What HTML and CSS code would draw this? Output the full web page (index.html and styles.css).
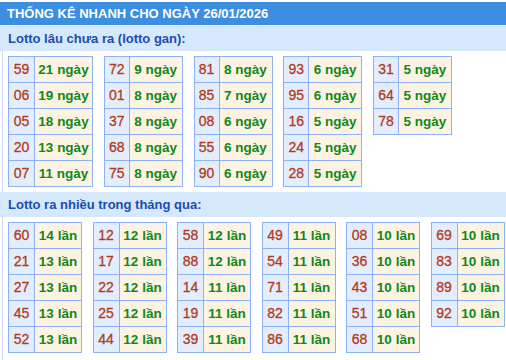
FILE: index.html
```html
<!DOCTYPE html>
<html lang="vi">
<head>
<meta charset="utf-8">
<title>Thống kê nhanh</title>
<link rel="stylesheet" href="styles.css">
</head>
<body>
<div class="page">
  <div class="title">THỐNG KÊ NHANH CHO NGÀY 26/01/2026</div>
  <div class="sub">Lotto lâu chưa ra (lotto gan):</div>
  <div class="body gan">
    <div class="tbl wide">
      <div class="num">59</div><div class="val">21 ngày</div>
      <div class="num">06</div><div class="val">19 ngày</div>
      <div class="num">05</div><div class="val">18 ngày</div>
      <div class="num">20</div><div class="val">13 ngày</div>
      <div class="num">07</div><div class="val">11 ngày</div>
    </div>
    <div class="tbl">
      <div class="num">72</div><div class="val">9 ngày</div>
      <div class="num">01</div><div class="val">8 ngày</div>
      <div class="num">37</div><div class="val">8 ngày</div>
      <div class="num">68</div><div class="val">8 ngày</div>
      <div class="num">75</div><div class="val">8 ngày</div>
    </div>
    <div class="tbl">
      <div class="num">81</div><div class="val">8 ngày</div>
      <div class="num">85</div><div class="val">7 ngày</div>
      <div class="num">08</div><div class="val">6 ngày</div>
      <div class="num">55</div><div class="val">6 ngày</div>
      <div class="num">90</div><div class="val">6 ngày</div>
    </div>
    <div class="tbl">
      <div class="num">93</div><div class="val">6 ngày</div>
      <div class="num">95</div><div class="val">6 ngày</div>
      <div class="num">16</div><div class="val">5 ngày</div>
      <div class="num">24</div><div class="val">5 ngày</div>
      <div class="num">28</div><div class="val">5 ngày</div>
    </div>
    <div class="tbl">
      <div class="num">31</div><div class="val">5 ngày</div>
      <div class="num">64</div><div class="val">5 ngày</div>
      <div class="num">78</div><div class="val">5 ngày</div>
    </div>
  </div>
  <div class="sub sub2">Lotto ra nhiều trong tháng qua:</div>
  <div class="body nhieu">
    <div class="tbl">
      <div class="num">60</div><div class="val">14 lần</div>
      <div class="num">21</div><div class="val">13 lần</div>
      <div class="num">27</div><div class="val">13 lần</div>
      <div class="num">45</div><div class="val">13 lần</div>
      <div class="num">52</div><div class="val">13 lần</div>
    </div>
    <div class="tbl">
      <div class="num">12</div><div class="val">12 lần</div>
      <div class="num">17</div><div class="val">12 lần</div>
      <div class="num">22</div><div class="val">12 lần</div>
      <div class="num">25</div><div class="val">12 lần</div>
      <div class="num">44</div><div class="val">12 lần</div>
    </div>
    <div class="tbl">
      <div class="num">58</div><div class="val">12 lần</div>
      <div class="num">88</div><div class="val">12 lần</div>
      <div class="num">14</div><div class="val">11 lần</div>
      <div class="num">19</div><div class="val">11 lần</div>
      <div class="num">39</div><div class="val">11 lần</div>
    </div>
    <div class="tbl">
      <div class="num">49</div><div class="val">11 lần</div>
      <div class="num">54</div><div class="val">11 lần</div>
      <div class="num">71</div><div class="val">11 lần</div>
      <div class="num">82</div><div class="val">11 lần</div>
      <div class="num">86</div><div class="val">11 lần</div>
    </div>
    <div class="tbl">
      <div class="num">08</div><div class="val">10 lần</div>
      <div class="num">36</div><div class="val">10 lần</div>
      <div class="num">43</div><div class="val">10 lần</div>
      <div class="num">51</div><div class="val">10 lần</div>
      <div class="num">68</div><div class="val">10 lần</div>
    </div>
    <div class="tbl">
      <div class="num">69</div><div class="val">10 lần</div>
      <div class="num">83</div><div class="val">10 lần</div>
      <div class="num">89</div><div class="val">10 lần</div>
      <div class="num">92</div><div class="val">10 lần</div>
    </div>
  </div>
</div>
</body>
</html>
```
FILE: styles.css
```css
html, body {
  margin: 0;
  padding: 0;
  background: #ffffff;
}
body {
  font-family: "Liberation Sans", Arial, sans-serif;
  font-size: 13px;
  font-weight: bold;
  overflow: hidden;
}
.page {
  padding-top: 2px;
  width: 506px;
}
.title {
  height: 23px;
  line-height: 23px;
  padding-left: 7px;
  background: #3b8ee0;
  color: #ffffff;
  font-size: 13px;
  white-space: nowrap;
}
.sub {
  height: 25px;
  line-height: 25px;
  border-top: 1px solid #e4effc;
  padding-left: 8px;
  background: #d5e8fc;
  color: #1c4db0;
  font-size: 13px;
}
.sub2 {
  height: 25px;
  line-height: 25px;
  border-top: 0;
}
.body {
  margin-left: 2px;
  border-left: 1px solid #c9dcf4;
  padding: 5px 0 5px 5px;
  display: flex;
  align-items: flex-start;
}
.gan {
  gap: 10.75px;
}
.nhieu {
  gap: 10.5px;
  padding-bottom: 8px;
}
.tbl {
  display: grid;
  grid-template-columns: 25px 53px;
  border-top: 1px solid #8db1f4;
  border-left: 1px solid #8db1f4;
}
.tbl.wide {
  grid-template-columns: 26px 58px;
}
.nhieu .tbl {
  grid-template-columns: 26px 47px;
}
.num, .val {
  box-sizing: border-box;
  height: 26px;
  line-height: 25px;
  text-align: center;
  border-right: 1px solid #8db1f4;
  border-bottom: 1px solid #8db1f4;
  white-space: nowrap;
  font-size: 13.5px;
}
.num {
  background: #e2eefd;
  color: #b5391b;
  font-weight: normal;
  font-size: 14px;
  -webkit-text-stroke: 0.3px #b5391b;
}
.val {
  background: #fdf3e2;
  color: #12871a;
}
```
